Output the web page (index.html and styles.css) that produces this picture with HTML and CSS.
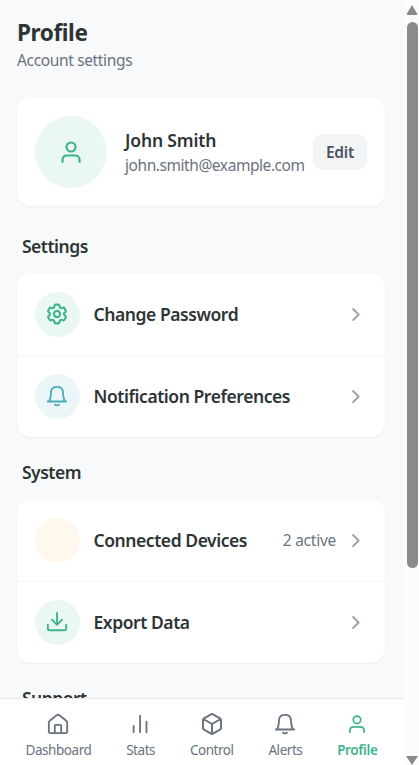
FILE: index.html
```
<!DOCTYPE html>
<html lang="en">
<head>
<meta charset="utf-8">
<title>Profile</title>
<link rel="stylesheet" href="styles.css">
</head>
<body>
<svg class="defs" width="0" height="0" aria-hidden="true">
  <symbol id="user" viewBox="0 0 24 24"><circle cx="12" cy="7" r="4.500"/><path d="M3.500 22v-2.500a4 4 0 0 1 4-4h9a4 4 0 0 1 4 4V22"/></symbol>
  <symbol id="gear" viewBox="1.4 1.4 21.2 21.2"><circle cx="12" cy="12" r="3"/><path d="M9.594 3.940c.09-.542.56-.94 1.110-.94h2.593c.55 0 1.020.398 1.110.94l.213 1.281c.063.374.313.686.645.87.074.04.147.083.22.127.325.196.72.257 1.075.124l1.217-.456a1.125 1.125 0 0 1 1.370.49l1.296 2.247a1.125 1.125 0 0 1-.26 1.431l-1.003.827c-.293.241-.438.613-.43.992a7.723 7.723 0 0 1 0 .255c-.008.378.137.75.43.991l1.004.827c.424.35.534.955.26 1.430l-1.298 2.247a1.125 1.125 0 0 1-1.369.491l-1.217-.456c-.355-.133-.75-.072-1.076.124a6.470 6.470 0 0 1-.22.128c-.331.183-.581.495-.644.869l-.213 1.281c-.09.543-.56.94-1.110.94h-2.594c-.55 0-1.019-.398-1.110-.94l-.213-1.281c-.062-.374-.312-.686-.644-.87a6.520 6.520 0 0 1-.22-.127c-.325-.196-.72-.257-1.076-.124l-1.217.456a1.125 1.125 0 0 1-1.369-.49l-1.297-2.247a1.125 1.125 0 0 1 .26-1.431l1.004-.827c.292-.24.437-.613.43-.991a6.932 6.932 0 0 1 0-.255c.007-.38-.138-.751-.43-.992l-1.004-.827a1.125 1.125 0 0 1-.26-1.430l1.297-2.247a1.125 1.125 0 0 1 1.370-.491l1.216.456c.356.133.751.072 1.076-.124.072-.044.146-.086.22-.128.332-.183.582-.495.644-.869z"/></symbol>
  <symbol id="bell" viewBox="0 0 24 24"><path d="M2 18h20M3.500 17.500C5 15 5 13.500 5.200 11l.3-3.500C5.800 4 8.300 2 12 2s6.200 2 6.500 5.500l.3 3.500c.2 2.500.2 4 1.700 6.500M9.800 21.500a2.500 1.300 0 0 0 4.400 0"/></symbol>
  <symbol id="download" viewBox="0 0 24 24"><path d="M12 2v13M6.500 9.500L12 15l5.500-5.500M2 15v4a2 2 0 0 0 2 2h16a2 2 0 0 0 2-2v-4"/></symbol>
  <symbol id="home" viewBox="0 0 24 24"><path d="M2 10.500a2.500 2.500 0 0 1 1-2l7.500-6a2.400 2.400 0 0 1 3 0l7.500 6a2.500 2.500 0 0 1 1 2V20a2 2 0 0 1-2 2H4a2 2 0 0 1-2-2zM8.500 22v-8a1 1 0 0 1 1-1h5a1 1 0 0 1 1 1v8"/></symbol>
  <symbol id="stats" viewBox="0 0 24 24"><path d="M4 21v-7M11 21V3M18 21V9.500"/></symbol>
  <symbol id="box" viewBox="1 1 22 22"><path d="M21 16V8a2 2 0 0 0-1-1.730l-7-4a2 2 0 0 0-2 0l-7 4A2 2 0 0 0 3 8v8a2 2 0 0 0 1 1.730l7 4a2 2 0 0 0 2 0l7-4A2 2 0 0 0 21 16zM3.300 7L12 12l8.700-5M12 22V12"/></symbol>
  <symbol id="chevron" viewBox="0 0 24 24"><path d="M9 5l7 7-7 7"/></symbol>
</svg>
<div class="app">
  <main class="content">
    <header class="head"><h1>Profile</h1><p class="sub">Account settings</p></header>
    <section class="card user">
      <div class="avatar"><svg class="icon avatar-icon"><use href="#user"/></svg></div>
      <div class="who"><div class="name">John Smith</div><div class="email">john.smith@example.com</div></div>
      <button class="edit">Edit</button>
    </section>
    <h2>Settings</h2>
    <section class="card">
      <div class="row"><div class="dot green"><svg class="icon"><use href="#gear"/></svg></div><span class="label">Change Password</span><svg class="icon chevron"><use href="#chevron"/></svg></div>
      <div class="row"><div class="dot blue"><svg class="icon"><use href="#bell"/></svg></div><span class="label">Notification Preferences</span><svg class="icon chevron"><use href="#chevron"/></svg></div>
    </section>
    <h2 class="next">System</h2>
    <section class="card">
      <div class="row"><div class="dot cream"></div><span class="label">Connected Devices</span><span class="meta">2 active</span><svg class="icon chevron"><use href="#chevron"/></svg></div>
      <div class="row"><div class="dot green"><svg class="icon"><use href="#download"/></svg></div><span class="label">Export Data</span><svg class="icon chevron"><use href="#chevron"/></svg></div>
    </section>
    <h2 class="next">Support</h2>
  </main>
  <nav class="tabs">
    <a class="tab"><svg class="icon"><use href="#home"/></svg><span>Dashboard</span></a>
    <a class="tab"><svg class="icon"><use href="#stats"/></svg><span>Stats</span></a>
    <a class="tab"><svg class="icon"><use href="#box"/></svg><span>Control</span></a>
    <a class="tab"><svg class="icon"><use href="#bell"/></svg><span>Alerts</span></a>
    <a class="tab active"><svg class="icon"><use href="#user"/></svg><span>Profile</span></a>
  </nav>
</div>
<div class="scrollbar"><i class="up"></i><i class="thumb"></i><i class="down"></i></div>
</body>
</html>
```
FILE: styles.css
```
* { box-sizing: border-box; }
html, body { margin: 0; height: 100%; overflow: hidden; }
body { display: flex; font-family: "Noto Sans", "Open Sans", sans-serif; font-size: 18px; color: #2d3436; background: #f8f9fb; }
.defs { position: absolute; }
.app { width: 403px; height: 765px; display: flex; flex-direction: column; }
.content { flex: 1; min-height: 0; overflow: hidden; padding: 18px 18px 0 17px; }
.head { height: 80px; }
h1 { margin: 0; font-size: 22.5px; line-height: 30px; font-weight: 700; letter-spacing: -0.4px; }
.sub { margin: 0; font-size: 15.5px; line-height: 25px; color: #6b7280; letter-spacing: -0.35px; }
.card { background: #fff; border-radius: 14px; box-shadow: 0 1px 2px rgba(0,0,0,.05); }
.user { height: 108px; padding: 18px; display: flex; align-items: center; }
.avatar { width: 72px; height: 72px; border-radius: 50%; background: #eaf7f2; color: #3eb489; display: flex; align-items: center; justify-content: center; flex: none; }
.who { margin-left: 18px; width: 188px; flex: none; white-space: nowrap; }
.name { font-size: 17.5px; line-height: 25px; font-weight: 600; letter-spacing: -0.15px; }
.email { font-size: 15.5px; line-height: 24px; color: #6b7280; letter-spacing: -0.44px; }
.edit { width: 54px; height: 36px; flex: none; padding: 0; border: 0; border-radius: 9px; background: #f3f4f6; color: #4b5563; font: 600 15.5px "Noto Sans", sans-serif; letter-spacing: -0.2px; }
h2 { margin: 27px 0 14px 5px; font-size: 17.5px; line-height: 27px; font-weight: 600; letter-spacing: -0.5px; }
h2.next { margin-top: 22px; }
.row { display: flex; align-items: center; height: 81px; padding: 0 18px; }
.row + .row { height: 82px; border-top: 1px solid #f3f4f6; }
.dot { width: 45px; height: 45px; flex: none; border-radius: 50%; display: flex; align-items: center; justify-content: center; }
.green { background: #eaf7f2; color: #3eb489; }
.blue { background: #ecf6f8; color: #4bacbf; }
.cream { background: #fff9ed; }
.label { flex: 1; margin: 0 0 2px 13.5px; font-size: 17.5px; font-weight: 600; letter-spacing: -0.44px; white-space: nowrap; }
.meta { font-size: 15.5px; color: #6b7280; margin: 0 10px 1px 0; letter-spacing: -0.25px; }
.icon { width: 22px; height: 22px; flex: none; fill: none; stroke: currentColor; stroke-width: 2; stroke-linecap: round; stroke-linejoin: round; }
.dot .icon { margin: 0 1px 1px 0; }
.avatar-icon { width: 24px; height: 24px; stroke-width: 2.2; }
.row .chevron { width: 19px; height: 19px; margin: 0 2px 1px 0; color: #9ca3af; stroke-width: 2.4; }
.tabs { height: 67px; flex: none; padding: 14px 17px 0; border-top: 1px solid #e5e7eb; background: #fff; display: flex; justify-content: space-between; }
.tab { display: flex; flex-direction: column; align-items: center; padding: 0 8.5px; font-size: 13.5px; line-height: 18px; color: #6b7280; letter-spacing: -0.45px; }
.tab span { margin-top: 6px; }
.tab.active { color: #3eb489; font-weight: 600; letter-spacing: -0.35px; }
.tab.active .icon { width: 20px; height: 20px; margin: 1px; }
.scrollbar { width: 16px; height: 765px; background: #fcfcfc; display: flex; flex-direction: column; align-items: flex-start; padding: 5px 0 0 3px; }
.up { border: 6px solid transparent; border-top: 0; border-bottom: 10px solid #8b8b8b; border-radius: 2px; }
.thumb { width: 11px; height: 546px; margin: 7px 0 0 1px; border-radius: 6px; background: #8b8b8b; }
.down { margin-top: auto; border: 6px solid transparent; border-bottom: 0; border-top: 9px solid #8b8b8b; }
```
